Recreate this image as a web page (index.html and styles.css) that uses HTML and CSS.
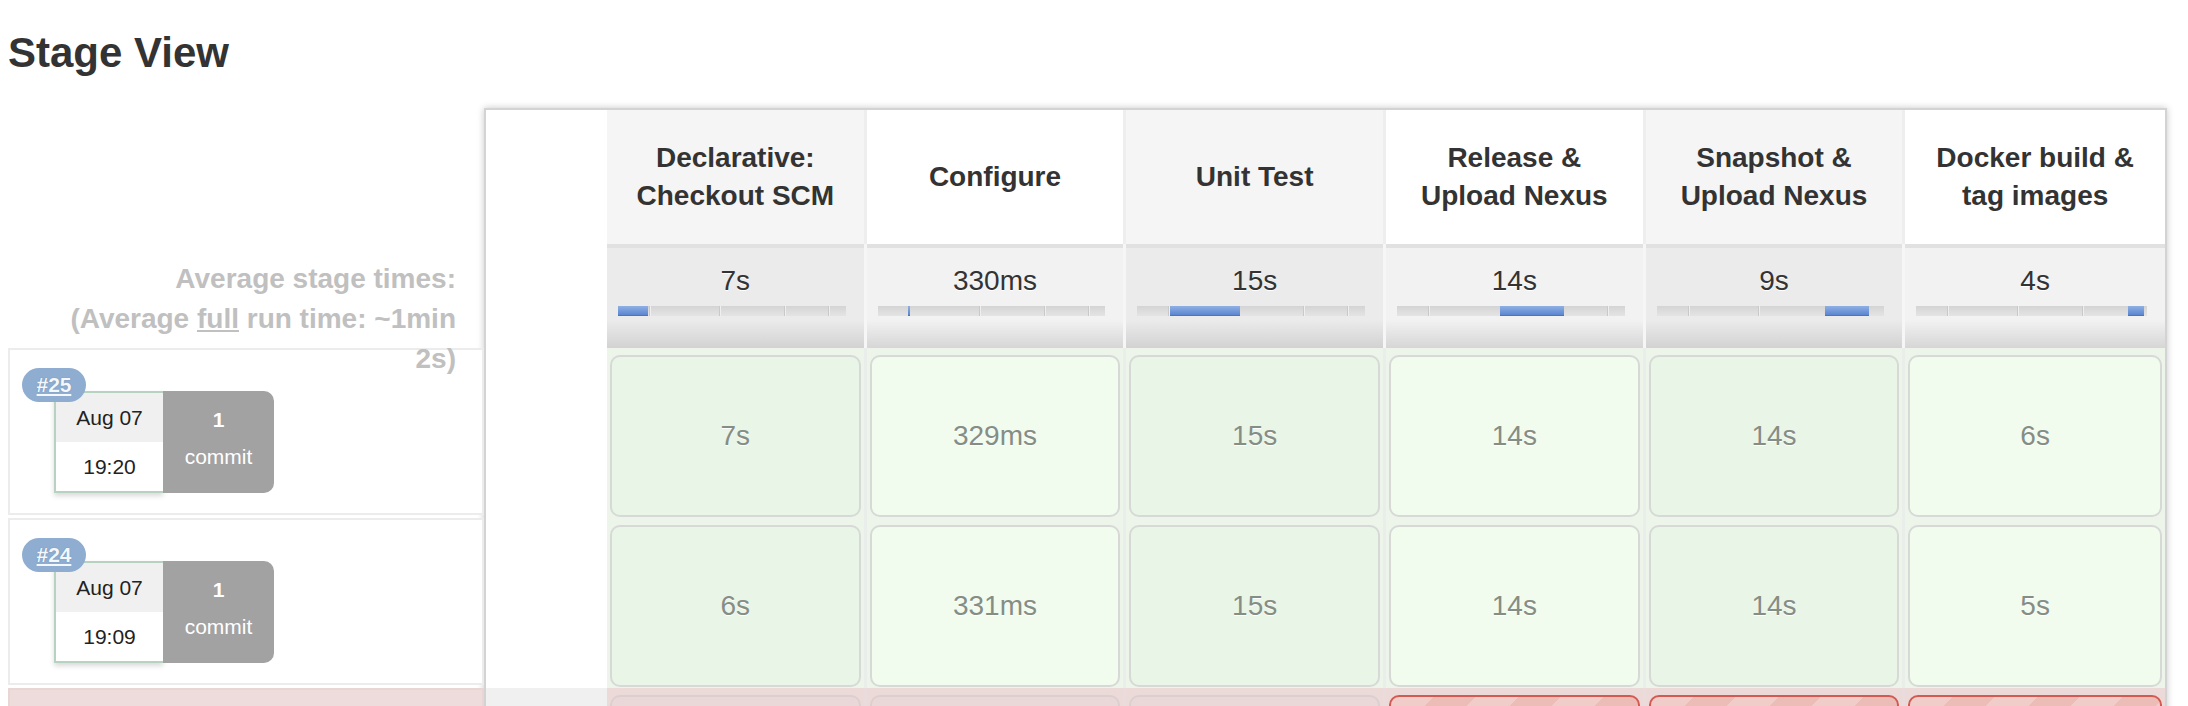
FILE: index.html
```html
<!DOCTYPE html>
<html>
<head>
<meta charset="utf-8">
<link rel="stylesheet" href="styles.css">
</head>
<body>
<div class="page">
  <h2 class="title">Stage View</h2>
  <div class="stage-view">
    <div class="left-col">
      <div class="left-spacer"></div>
      <div class="avg-label">Average stage times:<br>(Average <u>full</u> run time: ~1min 2s)</div>
      <div class="run-row">
        <a class="badge">#25</a>
        <div class="run-info">
          <div class="date-box"><div class="date">Aug 07</div><div class="time">19:20</div></div>
          <div class="commit-box"><b>1</b><span>commit</span></div>
        </div>
      </div>
      <div class="run-row">
        <a class="badge">#24</a>
        <div class="run-info">
          <div class="date-box"><div class="date">Aug 07</div><div class="time">19:09</div></div>
          <div class="commit-box"><b>1</b><span>commit</span></div>
        </div>
      </div>
      <div class="run-row failed"></div>
    </div>

    <div class="table-box">
      <div class="grid">
        <div class="hcell first"></div>
        <div class="hcell odd">Declarative: Checkout SCM</div>
        <div class="hcell">Configure</div>
        <div class="hcell odd">Unit Test</div>
        <div class="hcell">Release &amp; Upload Nexus</div>
        <div class="hcell odd">Snapshot &amp; Upload Nexus</div>
        <div class="hcell last">Docker build &amp; tag images</div>

        <div class="acell first"></div>
        <div class="acell odd"><div class="avg-time">7s</div><div class="bar"><i class="tick" style="left:31px"></i><i class="tick" style="left:101px"></i><i class="tick" style="left:166px"></i><i class="tick" style="left:210px"></i><i class="fill" style="left:0;width:30px"></i></div></div>
        <div class="acell"><div class="avg-time">330ms</div><div class="bar"><i class="tick" style="left:101px"></i><i class="tick" style="left:166px"></i><i class="tick" style="left:210px"></i><i class="fill" style="left:30px;width:2px"></i></div></div>
        <div class="acell odd"><div class="avg-time">15s</div><div class="bar"><i class="tick" style="left:31px"></i><i class="tick" style="left:166px"></i><i class="tick" style="left:210px"></i><i class="fill" style="left:33px;width:70px"></i></div></div>
        <div class="acell"><div class="avg-time">14s</div><div class="bar"><i class="tick" style="left:31px"></i><i class="tick" style="left:210px"></i><i class="fill" style="left:103px;width:64px"></i></div></div>
        <div class="acell odd"><div class="avg-time">9s</div><div class="bar"><i class="tick" style="left:31px"></i><i class="tick" style="left:101px"></i><i class="fill" style="left:168px;width:44px"></i></div></div>
        <div class="acell last"><div class="avg-time">4s</div><div class="bar"><i class="tick" style="left:31px"></i><i class="tick" style="left:101px"></i><i class="tick" style="left:166px"></i><i class="fill" style="left:212px;width:16px"></i></div></div>

        <div class="rcell first"></div>
        <div class="rcell odd"><div class="box">7s</div></div>
        <div class="rcell"><div class="box">329ms</div></div>
        <div class="rcell odd"><div class="box">15s</div></div>
        <div class="rcell"><div class="box">14s</div></div>
        <div class="rcell odd"><div class="box">14s</div></div>
        <div class="rcell last"><div class="box">6s</div></div>

        <div class="rcell first"></div>
        <div class="rcell odd"><div class="box">6s</div></div>
        <div class="rcell"><div class="box">331ms</div></div>
        <div class="rcell odd"><div class="box">15s</div></div>
        <div class="rcell"><div class="box">14s</div></div>
        <div class="rcell odd"><div class="box">14s</div></div>
        <div class="rcell last"><div class="box">5s</div></div>

        <div class="rcell first fail"></div>
        <div class="rcell odd fail"><div class="box pale"></div></div>
        <div class="rcell fail"><div class="box pale"></div></div>
        <div class="rcell odd fail"><div class="box pale"></div></div>
        <div class="rcell fail"><div class="box red"></div></div>
        <div class="rcell odd fail"><div class="box red"></div></div>
        <div class="rcell last fail"><div class="box red"></div></div>
      </div>
    </div>
  </div>
</div>
</body>
</html>
```

FILE: styles.css
```css
* { box-sizing: border-box; }

body {
  margin: 0;
  background: #fff;
  color: #333;
  font-family: "Liberation Sans", Arial, Helvetica, sans-serif;
}

.page {
  padding: 29px 21px 0 8px;
}

.title {
  margin: 0 0 31px 0;
  font-size: 42px;
  line-height: 48px;
  font-weight: bold;
  color: #333;
}

.stage-view {
  display: flex;
  align-items: flex-start;
}

/* ---------- left column ---------- */
.left-col {
  width: 476px;
  flex: none;
}

.left-spacer { height: 136px; }

.avg-label {
  height: 104px;
  padding: 15px 28px 0 40px;
  text-align: right;
  font-size: 28px;
  line-height: 40px;
  font-weight: bold;
  color: #c0c0c0;
  position: relative;
  z-index: 2;
}

.avg-label u { text-decoration: underline; }

.run-row {
  position: relative;
  height: 167px;
  margin-bottom: 3px;
  border: 2px solid #ececec;
  background: #fff;
  padding: 41px 0 0 44px;
}

.run-row.failed {
  background: #eddcdb;
  border-color: #e8d6d5;
}

.badge {
  position: absolute;
  left: 12px;
  top: 18px;
  z-index: 3;
  width: 64px;
  height: 34px;
  border-radius: 17px;
  background: #8eadd1;
  color: #f4f7fb;
  font-size: 21px;
  font-weight: bold;
  line-height: 34px;
  text-align: center;
  text-decoration: underline;
  text-shadow: 0 0 1px #5a7aa0;
}

.run-info {
  display: flex;
}

.date-box {
  width: 109px;
  height: 102px;
  border: 2px solid #b7d2c0;
  border-right: none;
  box-shadow: 0 3px 5px rgba(0, 0, 0, 0.15);
  display: flex;
  flex-direction: column;
  font-size: 21px;
  color: #222;
  background: #fff;
}

.date-box .date,
.date-box .time {
  flex: 1;
  display: flex;
  align-items: center;
  justify-content: center;
}

.date-box .date { background: #f0f0f0; }

.commit-box {
  width: 111px;
  height: 102px;
  padding-bottom: 8px;
  background: #a2a2a2;
  border-radius: 0 10px 10px 0;
  color: #fff;
  font-size: 21px;
  line-height: 37px;
  display: flex;
  flex-direction: column;
  align-items: center;
  justify-content: center;
}

/* ---------- table ---------- */
.table-box {
  flex: 1;
  border: 2px solid #d3d3d3;
  background: #fff;
  box-shadow: 0 0 7px rgba(0, 0, 0, 0.22);
}

.grid {
  display: grid;
  grid-template-columns: 121px repeat(6, 1fr);
}

.hcell {
  height: 134px;
  display: flex;
  align-items: center;
  justify-content: center;
  text-align: center;
  padding: 0 15px;
  font-size: 28px;
  line-height: 38px;
  font-weight: bold;
  color: #333;
  background: #fff;
  border-right: 3px solid #eeeeee;
}

.hcell.odd { background: #f5f5f5; }
.hcell.first, .hcell.last, .acell.first, .acell.last, .rcell.first, .rcell.last { border-right: none; }

.acell {
  height: 104px;
  padding-top: 21px;
  background: linear-gradient(to bottom, #e1e1e1 0, #e1e1e1 4px, #f2f2f2 4px, #f2f2f2 76px, #d6d6d6 104px);
  border-right: 3px solid #f6f6f6;
  text-align: center;
}

.acell.odd {
  background: linear-gradient(to bottom, #e1e1e1 0, #e1e1e1 4px, #ebebeb 4px, #ebebeb 76px, #d2d2d2 104px);
}

.acell.first { background: #fff; }

.avg-time {
  font-size: 28px;
  line-height: 32px;
  color: #333;
  text-shadow: 0 1px 0 #fff;
}

.bar {
  position: relative;
  height: 10px;
  margin: 9px 18px 0 11px;
  background: linear-gradient(to bottom, #d4d4d4, #e4e4e4);
}

.bar .tick {
  position: absolute;
  top: 0;
  bottom: 0;
  width: 2px;
  background: #c9c9c9;
  border-right: 1px solid #efefef;
}

.bar .fill {
  position: absolute;
  top: 0;
  bottom: 0;
  background: linear-gradient(to bottom, #8fb0e4, #5b86d0);
  border-bottom: 1px solid #4a75c0;
}

.rcell {
  height: 170px;
  padding: 7px 3px 1px 3px;
  background: #edf4ea;
  border-right: 3px solid #eaeeea;
}

.rcell.first {
  background: #fff;
  padding: 0;
}

.rcell.fail { background: #ecdad9; border-right-color: #eadcdc; }
.rcell.first.fail { background: #f0f0f0; }

.box {
  height: 162px;
  border: 2px solid #d6d9d5;
  border-radius: 10px;
  background: #f1fcee;
  display: flex;
  align-items: center;
  justify-content: center;
  font-size: 28px;
  color: #858d85;
  text-shadow: 0 1px 0 #fff;
}

.rcell.odd .box { background: #e9f5e6; }

.box.pale,
.rcell.odd .box.pale {
  background: #ead8d8;
  border-color: #dccfcf;
}

.box.red,
.rcell.odd .box.red {
  border-color: #d25a52;
  background: repeating-linear-gradient(135deg, #f0cdc9 0, #f0cdc9 30px, #ecbcb7 30px, #ecbcb7 60px);
}
```
